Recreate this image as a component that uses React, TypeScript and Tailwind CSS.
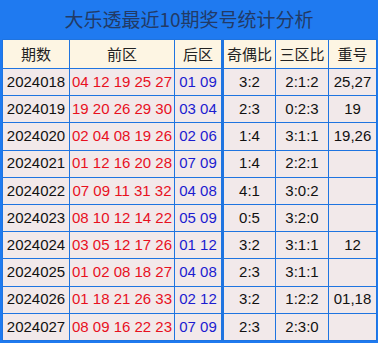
import React from "react";

const rows = [
  { qi: "2024018", front: "04 12 19 25 27", back: "01 09", jo: "3:2", sq: "2:1:2", cf: "25,27" },
  { qi: "2024019", front: "19 20 26 29 30", back: "03 04", jo: "2:3", sq: "0:2:3", cf: "19" },
  { qi: "2024020", front: "02 04 08 19 26", back: "02 06", jo: "1:4", sq: "3:1:1", cf: "19,26" },
  { qi: "2024021", front: "01 12 16 20 28", back: "07 09", jo: "1:4", sq: "2:2:1", cf: "" },
  { qi: "2024022", front: "07 09 11 31 32", back: "04 08", jo: "4:1", sq: "3:0:2", cf: "" },
  { qi: "2024023", front: "08 10 12 14 22", back: "05 09", jo: "0:5", sq: "3:2:0", cf: "" },
  { qi: "2024024", front: "03 05 12 17 26", back: "01 12", jo: "3:2", sq: "3:1:1", cf: "12" },
  { qi: "2024025", front: "01 02 08 18 27", back: "04 08", jo: "2:3", sq: "3:1:1", cf: "" },
  { qi: "2024026", front: "01 18 21 26 33", back: "02 12", jo: "3:2", sq: "1:2:2", cf: "01,18" },
  { qi: "2024027", front: "08 09 16 22 23", back: "07 09", jo: "2:3", sq: "2:3:0", cf: "" },
];

const cell = "border border-[#1f74e0] text-center p-0";

export default function App() {
  return (
    <div className="w-[378px] h-[343px] bg-[#1f7af0] px-[2px] pb-[3px] font-['Liberation_Sans','Noto_Sans_CJK_SC',sans-serif]">
      {/* Title */}
      <div className="h-[39px] flex items-center justify-center text-[19px] text-[#223a66] font-['Noto_Sans_CJK_SC',sans-serif]">
        大乐透最近10期奖号统计分析
      </div>

      <table className="w-[374px] border-collapse table-fixed text-[15px] text-[#111]">
        <colgroup>
          <col className="w-[67px]" />
          <col className="w-[105px]" />
          <col className="w-[48px]" />
          <col className="w-[53px]" />
          <col className="w-[53px]" />
          <col className="w-[48px]" />
        </colgroup>
        <thead>
          <tr className="h-[29px] bg-[#fdf5e3] text-[15px] text-[#222] font-['Noto_Sans_CJK_SC',sans-serif]">
            <th className={`${cell} font-normal`}>期数</th>
            <th className={`${cell} font-normal`}>前区</th>
            <th className={`${cell} font-normal border-r-[3px]`}>后区</th>
            <th className={`${cell} font-normal`}>奇偶比</th>
            <th className={`${cell} font-normal`}>三区比</th>
            <th className={`${cell} font-normal`}>重号</th>
          </tr>
        </thead>
        <tbody>
          {rows.map((r) => (
            <tr key={r.qi} className="h-[27.2px] bg-[#f2e9ea]">
              <td className={cell}>{r.qi}</td>
              <td className={`${cell} text-[#e8101e]`}>{r.front}</td>
              <td className={`${cell} text-[#1c1cd0] border-r-[3px]`}>{r.back}</td>
              <td className={cell}>{r.jo}</td>
              <td className={cell}>{r.sq}</td>
              <td className={cell}>{r.cf}</td>
            </tr>
          ))}
        </tbody>
      </table>
    </div>
  );
}
